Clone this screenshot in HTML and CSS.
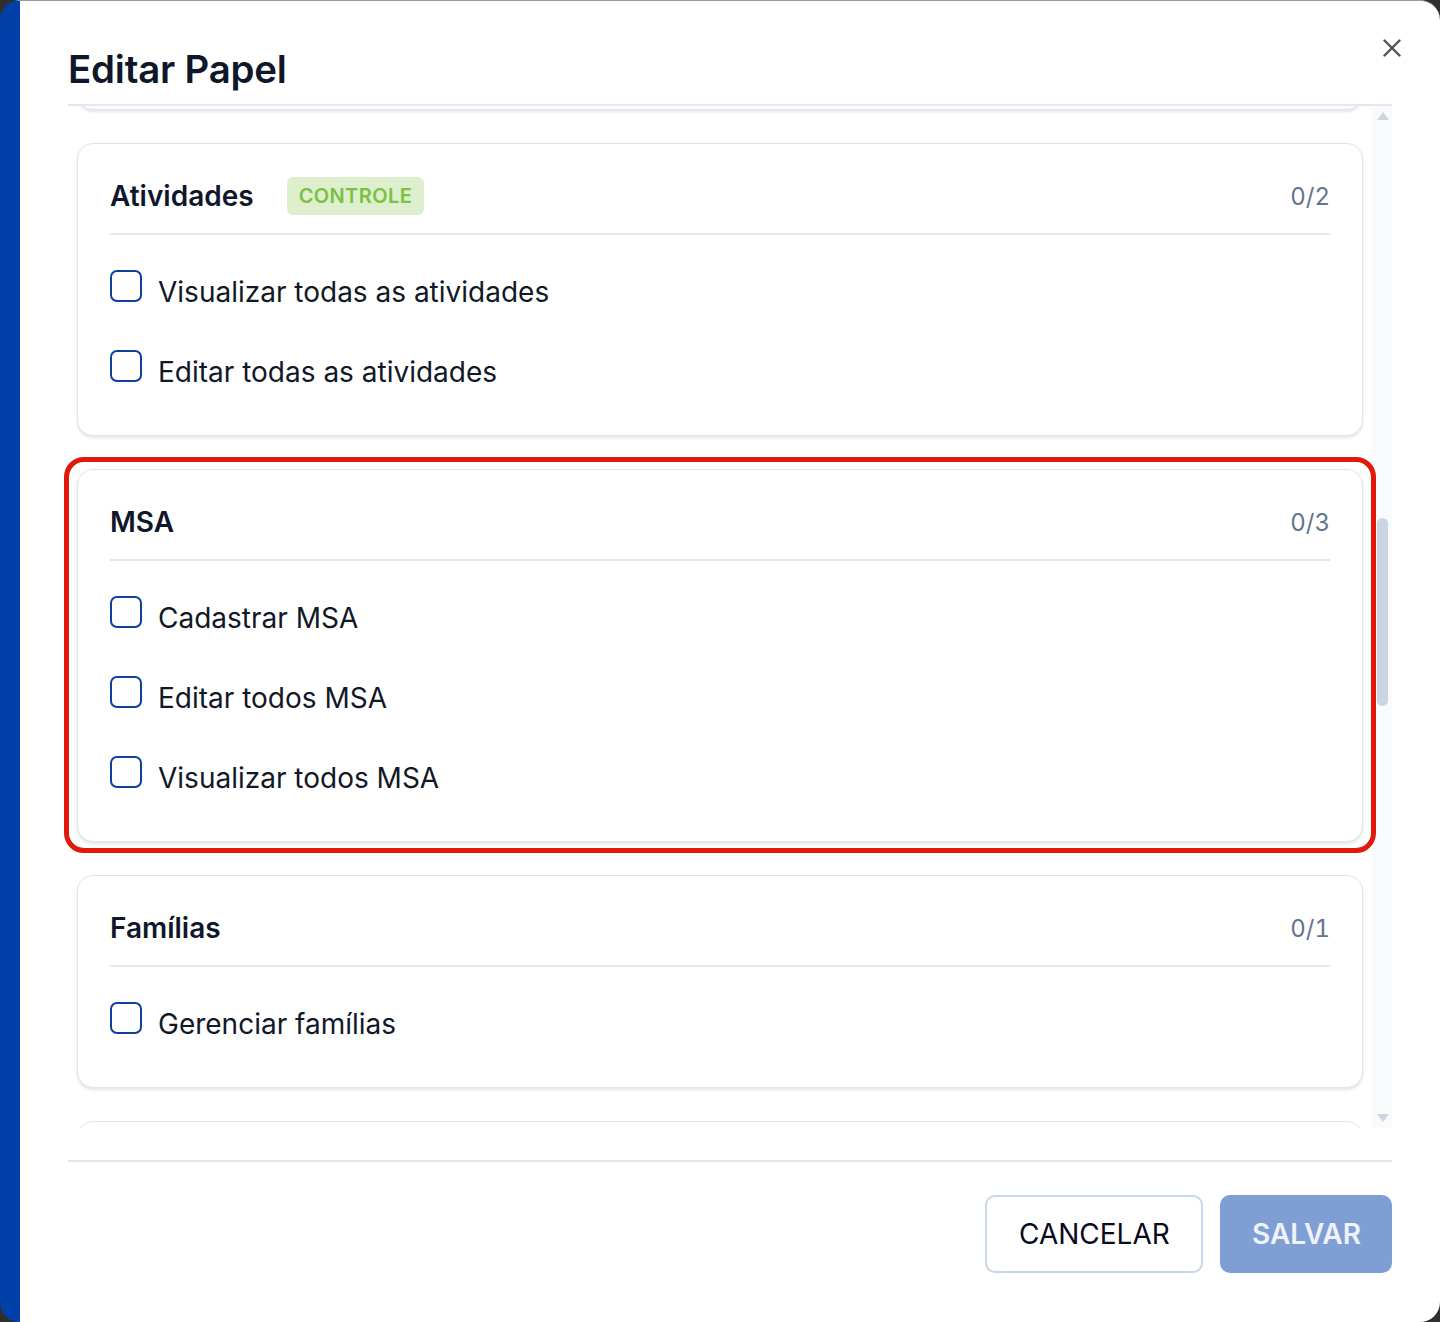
FILE: index.html
```html
<!DOCTYPE html>
<html lang="pt-BR">
<head>
<meta charset="utf-8">
<title>Editar Papel</title>
<link rel="stylesheet" href="styles.css">
</head>
<body>
<div class="dialog" role="dialog" aria-labelledby="dialog-title">
  <header class="dialog-header">
    <h1 id="dialog-title" class="dialog-title">Editar Papel</h1>
    <button class="close-btn" type="button" aria-label="Fechar">
      <svg viewBox="0 0 18 18" width="18" height="18" aria-hidden="true">
        <path d="M1.5 1.5 L16.5 16.5 M16.5 1.5 L1.5 16.5" stroke="#4b5563" stroke-width="2.4" stroke-linecap="round" fill="none"/>
      </svg>
    </button>
  </header>

  <div class="dialog-body">
    <div class="scrollbar" aria-hidden="true">
      <span class="arrow arrow-up"></span>
      <span class="thumb"></span>
      <span class="arrow arrow-down"></span>
    </div>

    <div class="viewport">
      <div class="card-list">
        <section class="card">
          <div class="card-head">
            <h2 class="card-title">Relatórios</h2>
            <span class="count">0/2</span>
          </div>
          <ul class="perm-list">
            <li class="perm"><span class="check"></span><span class="perm-label">Visualizar relatórios</span></li>
            <li class="perm"><span class="check"></span><span class="perm-label">Exportar relatórios</span></li>
          </ul>
        </section>

        <section class="card">
          <div class="card-head">
            <h2 class="card-title">Atividades</h2>
            <span class="badge">CONTROLE</span>
            <span class="count">0/2</span>
          </div>
          <ul class="perm-list">
            <li class="perm"><span class="check"></span><span class="perm-label">Visualizar todas as atividades</span></li>
            <li class="perm"><span class="check"></span><span class="perm-label">Editar todas as atividades</span></li>
          </ul>
        </section>

        <div class="highlight">
          <section class="card">
            <div class="card-head">
              <h2 class="card-title">MSA</h2>
              <span class="count">0/3</span>
            </div>
            <ul class="perm-list">
              <li class="perm"><span class="check"></span><span class="perm-label">Cadastrar MSA</span></li>
              <li class="perm"><span class="check"></span><span class="perm-label">Editar todos MSA</span></li>
              <li class="perm"><span class="check"></span><span class="perm-label">Visualizar todos MSA</span></li>
            </ul>
          </section>
        </div>

        <section class="card">
          <div class="card-head">
            <h2 class="card-title">Famílias</h2>
            <span class="count">0/1</span>
          </div>
          <ul class="perm-list">
            <li class="perm"><span class="check"></span><span class="perm-label">Gerenciar famílias</span></li>
          </ul>
        </section>

        <section class="card">
          <div class="card-head">
            <h2 class="card-title">Usuários</h2>
            <span class="count">0/2</span>
          </div>
          <ul class="perm-list">
            <li class="perm"><span class="check"></span><span class="perm-label">Visualizar usuários</span></li>
            <li class="perm"><span class="check"></span><span class="perm-label">Editar usuários</span></li>
          </ul>
        </section>
      </div>
    </div>
  </div>

  <footer class="dialog-footer">
    <button class="btn btn-outline" type="button">CANCELAR</button>
    <button class="btn btn-primary" type="button">SALVAR</button>
  </footer>
</div>
</body>
</html>
```

FILE: styles.css
```css
* { box-sizing: border-box; }

html, body {
  margin: 0;
  height: 100%;
}

body {
  background: #2f2f2f;
  font-family: Inter, "Noto Sans", "Liberation Sans", sans-serif;
  color: #0f172a;
}

/* modal shell */
.dialog {
  height: 1322px;
  display: flex;
  flex-direction: column;
  background: #ffffff;
  border-top: 1px solid #9a9a9a;
  border-left: 20px solid #0040a8;
  border-radius: 20px;
  overflow: hidden;
}

.dialog-header {
  margin: 0 48px;
  padding: 45px 0 12px;
  border-bottom: 2px solid #e2e8f0;
  display: flex;
  align-items: flex-start;
  justify-content: space-between;
}

.dialog-title {
  margin: 0;
  font-size: 38.4px;
  line-height: 46px;
  font-weight: 600;
  letter-spacing: -0.2px;
  color: #0f172a;
}

.close-btn {
  margin: -7px -9px 0 0;
  width: 18px;
  height: 18px;
  padding: 0;
  border: 0;
  background: none;
  display: flex;
}

/* scrolling body: the track sits on the right, the list is clipped
   vertically only so the red focus frame may spill sideways */
.dialog-body {
  margin: 0 48px;
  height: 1022px;
  display: flex;
  flex-direction: row-reverse;
}

.viewport {
  flex: 1;
  padding: 0 9px;
  clip-path: inset(0 -24px 0 -12px);
}

.card-list {
  margin-top: -289px;
  display: flex;
  flex-direction: column;
  gap: 33px;
}

.card {
  background: #ffffff;
  border: 1px solid #dfe5ee;
  border-radius: 16px;
  box-shadow: 0 2px 3px rgba(30, 41, 59, 0.12);
  padding: 0 32px;
}

.highlight {
  margin: -12px -13px -11px;
  padding: 7px 8px 6px;
  border: 5px solid #e0190a;
  border-radius: 20px;
}

.card-head {
  padding: 31px 0 16px;
  border-bottom: 2px solid #e2e8f0;
  display: flex;
  align-items: center;
  height: 91px;
}

.card-title {
  margin: 0;
  font-size: 28px;
  line-height: 42px;
  font-weight: 600;
  color: #0f172a;
}

.badge {
  margin-left: 33px;
  height: 38px;
  padding: 0 12px;
  display: inline-flex;
  align-items: center;
  background: #ddefcd;
  color: #7bc143;
  border-radius: 6px;
  font-size: 20px;
  font-weight: 600;
  letter-spacing: 0.4px;
}

.count {
  margin-left: auto;
  font-size: 24px;
  color: #64748b;
  font-variant-numeric: tabular-nums;
}

.perm-list {
  list-style: none;
  margin: 0;
  padding: 35px 0 53px;
  display: flex;
  flex-direction: column;
  gap: 48px;
}

.perm {
  height: 32px;
  display: flex;
  align-items: baseline;
  gap: 16px;
}

.check {
  width: 32px;
  height: 32px;
  flex: none;
  border: 2px solid #0d3f9e;
  border-radius: 7px;
  background: #ffffff;
}

.perm-label {
  font-size: 28px;
  color: #111827;
  white-space: nowrap;
}

/* drawn scrollbar */
.scrollbar {
  width: 20px;
  flex: none;
  background: #f8fafc;
  display: flex;
  flex-direction: column;
  align-items: center;
}

.arrow {
  width: 0;
  height: 0;
  border-left: 6px solid transparent;
  border-right: 6px solid transparent;
  margin-left: 1px;
}

.arrow-up {
  margin-top: 6px;
  border-bottom: 8px solid #cbd5e1;
}

.arrow-down {
  margin-top: auto;
  margin-bottom: 6px;
  border-top: 8px solid #cbd5e1;
}

.thumb {
  margin-top: 398px;
  margin-left: 1px;
  width: 11px;
  height: 188px;
  border-radius: 6px;
  background: #cbd5e1;
}

/* footer */
.dialog-footer {
  margin: 32px 48px 0;
  padding: 33px 0 49px;
  border-top: 2px solid #e2e8f0;
  display: flex;
  justify-content: flex-end;
  gap: 17px;
}

.btn {
  height: 78px;
  border-radius: 10px;
  font-family: inherit;
  font-size: 28px;
  padding: 0 32px;
}

.btn-outline {
  width: 218px;
  background: #ffffff;
  border: 2px solid #c9d5e8;
  color: #0a0a1a;
  font-weight: 400;
}

.btn-primary {
  width: 172px;
  background: #7f9fd4;
  border: 0;
  color: #eef2fa;
  font-weight: 600;
}
```
